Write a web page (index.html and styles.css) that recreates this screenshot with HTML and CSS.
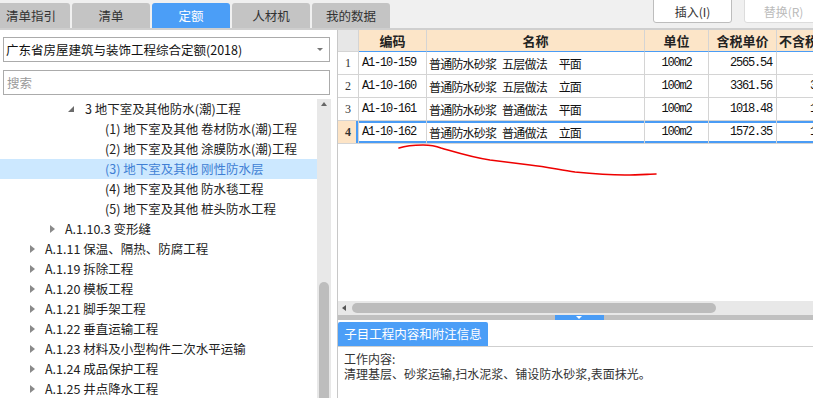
FILE: index.html
```html
<!DOCTYPE html>
<html>
<head>
  <title>定额</title>
  <meta charset="utf-8">
  <link rel="stylesheet" href="styles.css">
</head>
<body>
<div class="app">
  <div class="topbar">
    <div class="tabs">
      <span class="tab tab-first">清单指引</span>
      <span class="tab">清单</span>
      <span class="tab active">定额</span>
      <span class="tab">人材机</span>
      <span class="tab">我的数据</span>
    </div>
    <div class="actions">
      <button class="btn">插入(I)</button>
      <button class="btn disabled">替换(R)</button>
    </div>
  </div>

  <div class="main">
    <div class="left">
      <div class="select">广东省房屋建筑与装饰工程综合定额(2018)<span class="caret"></span></div>
      <input class="search" type="text" placeholder="搜索">
      <div class="tree-wrap">
        <ul class="tree">
          <li class="lv3"><span class="tg open"></span>3 地下室及其他防水(潮)工程</li>
          <li class="lv4">(1) 地下室及其他 卷材防水(潮)工程</li>
          <li class="lv4">(2) 地下室及其他 涂膜防水(潮)工程</li>
          <li class="lv4 selected">(3) 地下室及其他 刚性防水层</li>
          <li class="lv4">(4) 地下室及其他 防水毯工程</li>
          <li class="lv4">(5) 地下室及其他 桩头防水工程</li>
          <li class="lv2"><span class="tg"></span>A.1.10.3 变形缝</li>
          <li class="lv1"><span class="tg"></span>A.1.11 保温、隔热、防腐工程</li>
          <li class="lv1"><span class="tg"></span>A.1.19 拆除工程</li>
          <li class="lv1"><span class="tg"></span>A.1.20 模板工程</li>
          <li class="lv1"><span class="tg"></span>A.1.21 脚手架工程</li>
          <li class="lv1"><span class="tg"></span>A.1.22 垂直运输工程</li>
          <li class="lv1"><span class="tg"></span>A.1.23 材料及小型构件二次水平运输</li>
          <li class="lv1"><span class="tg"></span>A.1.24 成品保护工程</li>
          <li class="lv1"><span class="tg"></span>A.1.25 井点降水工程</li>
        </ul>
        <div class="vscroll">
          <span class="arrow-up"></span>
          <span class="vthumb"></span>
        </div>
      </div>
    </div>

    <div class="right">
      <div class="grid">
        <table>
          <colgroup>
            <col class="c-no"><col class="c-code"><col class="c-name"><col class="c-unit"><col class="c-price"><col class="c-price2">
          </colgroup>
          <thead>
            <tr>
              <th class="no"></th>
              <th>编码</th>
              <th>名称</th>
              <th>单位</th>
              <th>含税单价</th>
              <th>不含税单价</th>
            </tr>
          </thead>
          <tbody>
            <tr>
              <td class="no">1</td>
              <td class="code">A1-10-159</td>
              <td class="name">普通防水砂浆 五层做法  平面</td>
              <td class="unit">100m2</td>
              <td class="num">2565.54</td>
              <td class="num"></td>
            </tr>
            <tr>
              <td class="no">2</td>
              <td class="code">A1-10-160</td>
              <td class="name">普通防水砂浆 五层做法  立面</td>
              <td class="unit">100m2</td>
              <td class="num">3361.56</td>
              <td class="num cut">3</td>
            </tr>
            <tr>
              <td class="no">3</td>
              <td class="code">A1-10-161</td>
              <td class="name">普通防水砂浆 普通做法  平面</td>
              <td class="unit">100m2</td>
              <td class="num">1018.48</td>
              <td class="num cut">1</td>
            </tr>
            <tr class="sel">
              <td class="no">4</td>
              <td class="code">A1-10-162</td>
              <td class="name">普通防水砂浆 普通做法  立面</td>
              <td class="unit">100m2</td>
              <td class="num">1572.35</td>
              <td class="num cut">1</td>
            </tr>
          </tbody>
        </table>
      </div>
      <div class="hscroll">
        <span class="arrow-left"></span>
        <span class="hthumb"></span>
      </div>
      <div class="splitter"><span class="handle"></span></div>
      <div class="info">
        <div class="info-tabs"><span class="info-tab">子目工程内容和附注信息</span></div>
        <div class="info-body">
          <div>工作内容:</div>
          <div>清理基层、砂浆运输,扫水泥浆、铺设防水砂浆,表面抹光。</div>
        </div>
      </div>
    </div>
  </div>

  <!-- red pen mark drawn over the grid -->
  <svg class="scribble" width="813" height="398" viewBox="0 0 813 398">
    <path d="M399 148 C405 146,414 145,423 145 C431 145,436 146,441 148 C452 151,470 157,490 160 C505 162,515 163,530 165 C548 167,560 170,575 172 C595 174,612 175,625 175 C640 175,650 174,656 174" fill="none" stroke="#ee0000" stroke-width="1.6" stroke-linecap="round"/>
  </svg>
</div>
</body>
</html>
```

FILE: styles.css
```css
* {
  box-sizing: border-box;
}
body {
  margin: 0;
  padding: 0;
  font-family: "Noto Sans CJK SC", "Noto Sans", sans-serif;
  font-size: 12px;
  color: #222;
  background: #f0f0f0;
}
.app {
  position: relative;
  width: 813px;
  height: 398px;
  overflow: hidden;
}

/* top tabs + buttons */
.topbar {
  height: 30px;
  display: flex;
  justify-content: space-between;
  border-bottom: 2px solid #cfcfcf;
}
.tabs {
  display: flex;
  gap: 2px;
  padding-top: 3px;
}
.tab {
  width: 78px;
  height: 25px;
  line-height: 25px;
  text-align: center;
  background: #c4c4c4;
  color: #333;
  border-radius: 3px 3px 0 0;
  font-size: 12.5px;
}
.tab-first {
  margin-left: -8px;
}
.tab.active {
  background: #4b9ef7;
  color: #fff;
}
.actions {
  display: flex;
  gap: 12px;
  margin-right: -10px;
}
.btn {
  width: 79px;
  height: 26px;
  margin-top: -3px;
  padding: 3px 0 0;
  background: #fff;
  border: 1px solid #bdbdbd;
  border-radius: 3px;
  font-family: inherit;
  font-size: 12px;
  color: #333;
}
.btn.disabled {
  color: #bbb;
  border-color: #dcdcdc;
}

.main {
  display: flex;
  height: 368px;
}

/* left panel */
.left {
  width: 338px;
  background: #fff;
  border-right: 1px solid #c8c8c8;
  display: flex;
  flex-direction: column;
}
.select {
  position: relative;
  margin: 7px 7px 0 3px;
  height: 25px;
  line-height: 23px;
  padding-left: 2px;
  border: 1px solid #ababab;
  font-size: 12.5px;
  color: #111;
}
.caret {
  position: absolute;
  right: 6px;
  top: 10px;
  border-left: 3px solid transparent;
  border-right: 3px solid transparent;
  border-top: 3px solid #777;
}
.search {
  margin: 8px 7px 0 3px;
  height: 25px;
  padding: 0 0 0 3px;
  border: 1px solid #ababab;
  font-family: inherit;
  font-size: 12.5px;
  outline: none;
}
.search::placeholder {
  color: #9a9a9a;
}
.tree-wrap {
  flex: 1;
  display: flex;
  margin-top: 4px;
  overflow: hidden;
}
.tree {
  list-style: none;
  margin: 0;
  padding: 0;
  width: 317px;
}
.tree li {
  height: 20px;
  line-height: 20px;
  display: flex;
  align-items: center;
  white-space: nowrap;
  font-size: 12.5px;
}
.tree .lv1 { padding-left: 28px; }
.tree .lv2 { padding-left: 48px; }
.tree .lv3 { padding-left: 68px; }
.tree .lv4 { padding-left: 105px; }
.tree li.selected {
  background: #cce8ff;
  color: #3f7fd4;
}
.tg {
  width: 17px;
  height: 20px;
  position: relative;
}
.tg::before {
  content: "";
  position: absolute;
  left: 2px;
  top: 6px;
  border-top: 4px solid transparent;
  border-bottom: 4px solid transparent;
  border-left: 5px solid #8a8a8a;
}
.tg.open::before {
  left: 0;
  top: 7px;
  border-top: none;
  border-left: 6px solid transparent;
  border-bottom: 6px solid #6b6b6b;
}
.vscroll {
  position: relative;
  width: 14px;
  background: #e8e8e8;
}
.arrow-up {
  position: absolute;
  left: 4px;
  top: 3px;
  border-left: 3px solid transparent;
  border-right: 3px solid transparent;
  border-bottom: 4px solid #666;
}
.vthumb {
  position: absolute;
  left: 2px;
  top: 183px;
  width: 10px;
  height: 140px;
  background: #bdbdbd;
  border-radius: 5px;
}

/* right panel */
.right {
  flex: 1;
  display: flex;
  flex-direction: column;
  min-width: 0;
}
.grid {
  height: 271px;
  background: #fff;
  overflow: hidden;
}
table {
  table-layout: fixed;
  border-collapse: separate;
  border-spacing: 0;
  width: 509px;
}
.c-no { width: 21px; }
.c-code { width: 68px; }
.c-name { width: 218px; }
.c-unit { width: 64px; }
.c-price { width: 68px; }
.c-price2 { width: 70px; }
th {
  height: 22px;
  background: #fce5c8;
  border-right: 1px solid #d4d4d4;
  border-bottom: 1px solid #4a9cf5;
  font-size: 13px;
  font-weight: bold;
  color: #222;
  white-space: nowrap;
  overflow: hidden;
  padding: 0;
}
th.no {
  background: #e7e7e7;
  border-bottom-color: #d4d4d4;
}
td {
  height: 23px;
  border-right: 1px solid #d4d4d4;
  border-bottom: 1px solid #d4d4d4;
  padding: 0;
  white-space: nowrap;
  overflow: hidden;
}
td.no {
  text-align: center;
  font-family: "Liberation Serif", serif;
  font-size: 12px;
  color: #333;
  background: #fff;
}
td.code,
td.unit,
td.num {
  font-family: "Liberation Mono", monospace;
  font-size: 12px;
  letter-spacing: -1.2px;
  color: #111;
}
td.code {
  padding-left: 3px;
}
td.name {
  padding-left: 2px;
  font-size: 12px;
  letter-spacing: -0.8px;
  word-spacing: 4px;
  white-space: pre;
  color: #111;
}
td.unit {
  text-align: center;
}
td.num {
  text-align: right;
  padding-right: 4px;
}
td.cut {
  text-align: left;
  padding-left: 33px;
}
.sel td {
  box-shadow: inset 0 2px 0 #4a9cf5, inset 0 -2px 0 #4a9cf5;
}
.sel td.no {
  background: #fde4c6;
  font-weight: bold;
  box-shadow: inset -2px 0 0 #4a9cf5;
}
.hscroll {
  position: relative;
  height: 14px;
  background: #e8e8e8;
}
.arrow-left {
  position: absolute;
  left: 4px;
  top: 4px;
  border-top: 3px solid transparent;
  border-bottom: 3px solid transparent;
  border-right: 4px solid #555;
}
.hthumb {
  position: absolute;
  left: 14px;
  top: 2px;
  width: 364px;
  height: 10px;
  background: #bcbcbc;
  border-radius: 5px;
}
.splitter {
  height: 5px;
  background: #c0c0c0;
  position: relative;
}
.handle {
  position: absolute;
  left: 217px;
  top: 0;
  width: 49px;
  height: 5px;
  background: #4a9cf5;
}
.handle::after {
  content: "";
  position: absolute;
  left: 21px;
  top: 1px;
  border-left: 3px solid transparent;
  border-right: 3px solid transparent;
  border-top: 3px solid #fff;
}
.info {
  flex: 1;
  background: #fff;
}
.info-tabs {
  padding-top: 2px;
  border-bottom: 1px solid #cfcfcf;
  height: 27px;
}
.info-tab {
  display: inline-block;
  width: 150px;
  height: 24px;
  line-height: 24px;
  text-align: center;
  background: #4b9ef7;
  color: #fff;
  font-size: 12.5px;
  border-radius: 2px 2px 0 0;
}
.info-body {
  padding: 4px 6px;
  line-height: 15px;
  font-size: 12px;
  color: #333;
}

.scribble {
  position: absolute;
  left: 0;
  top: 0;
  pointer-events: none;
}
```
